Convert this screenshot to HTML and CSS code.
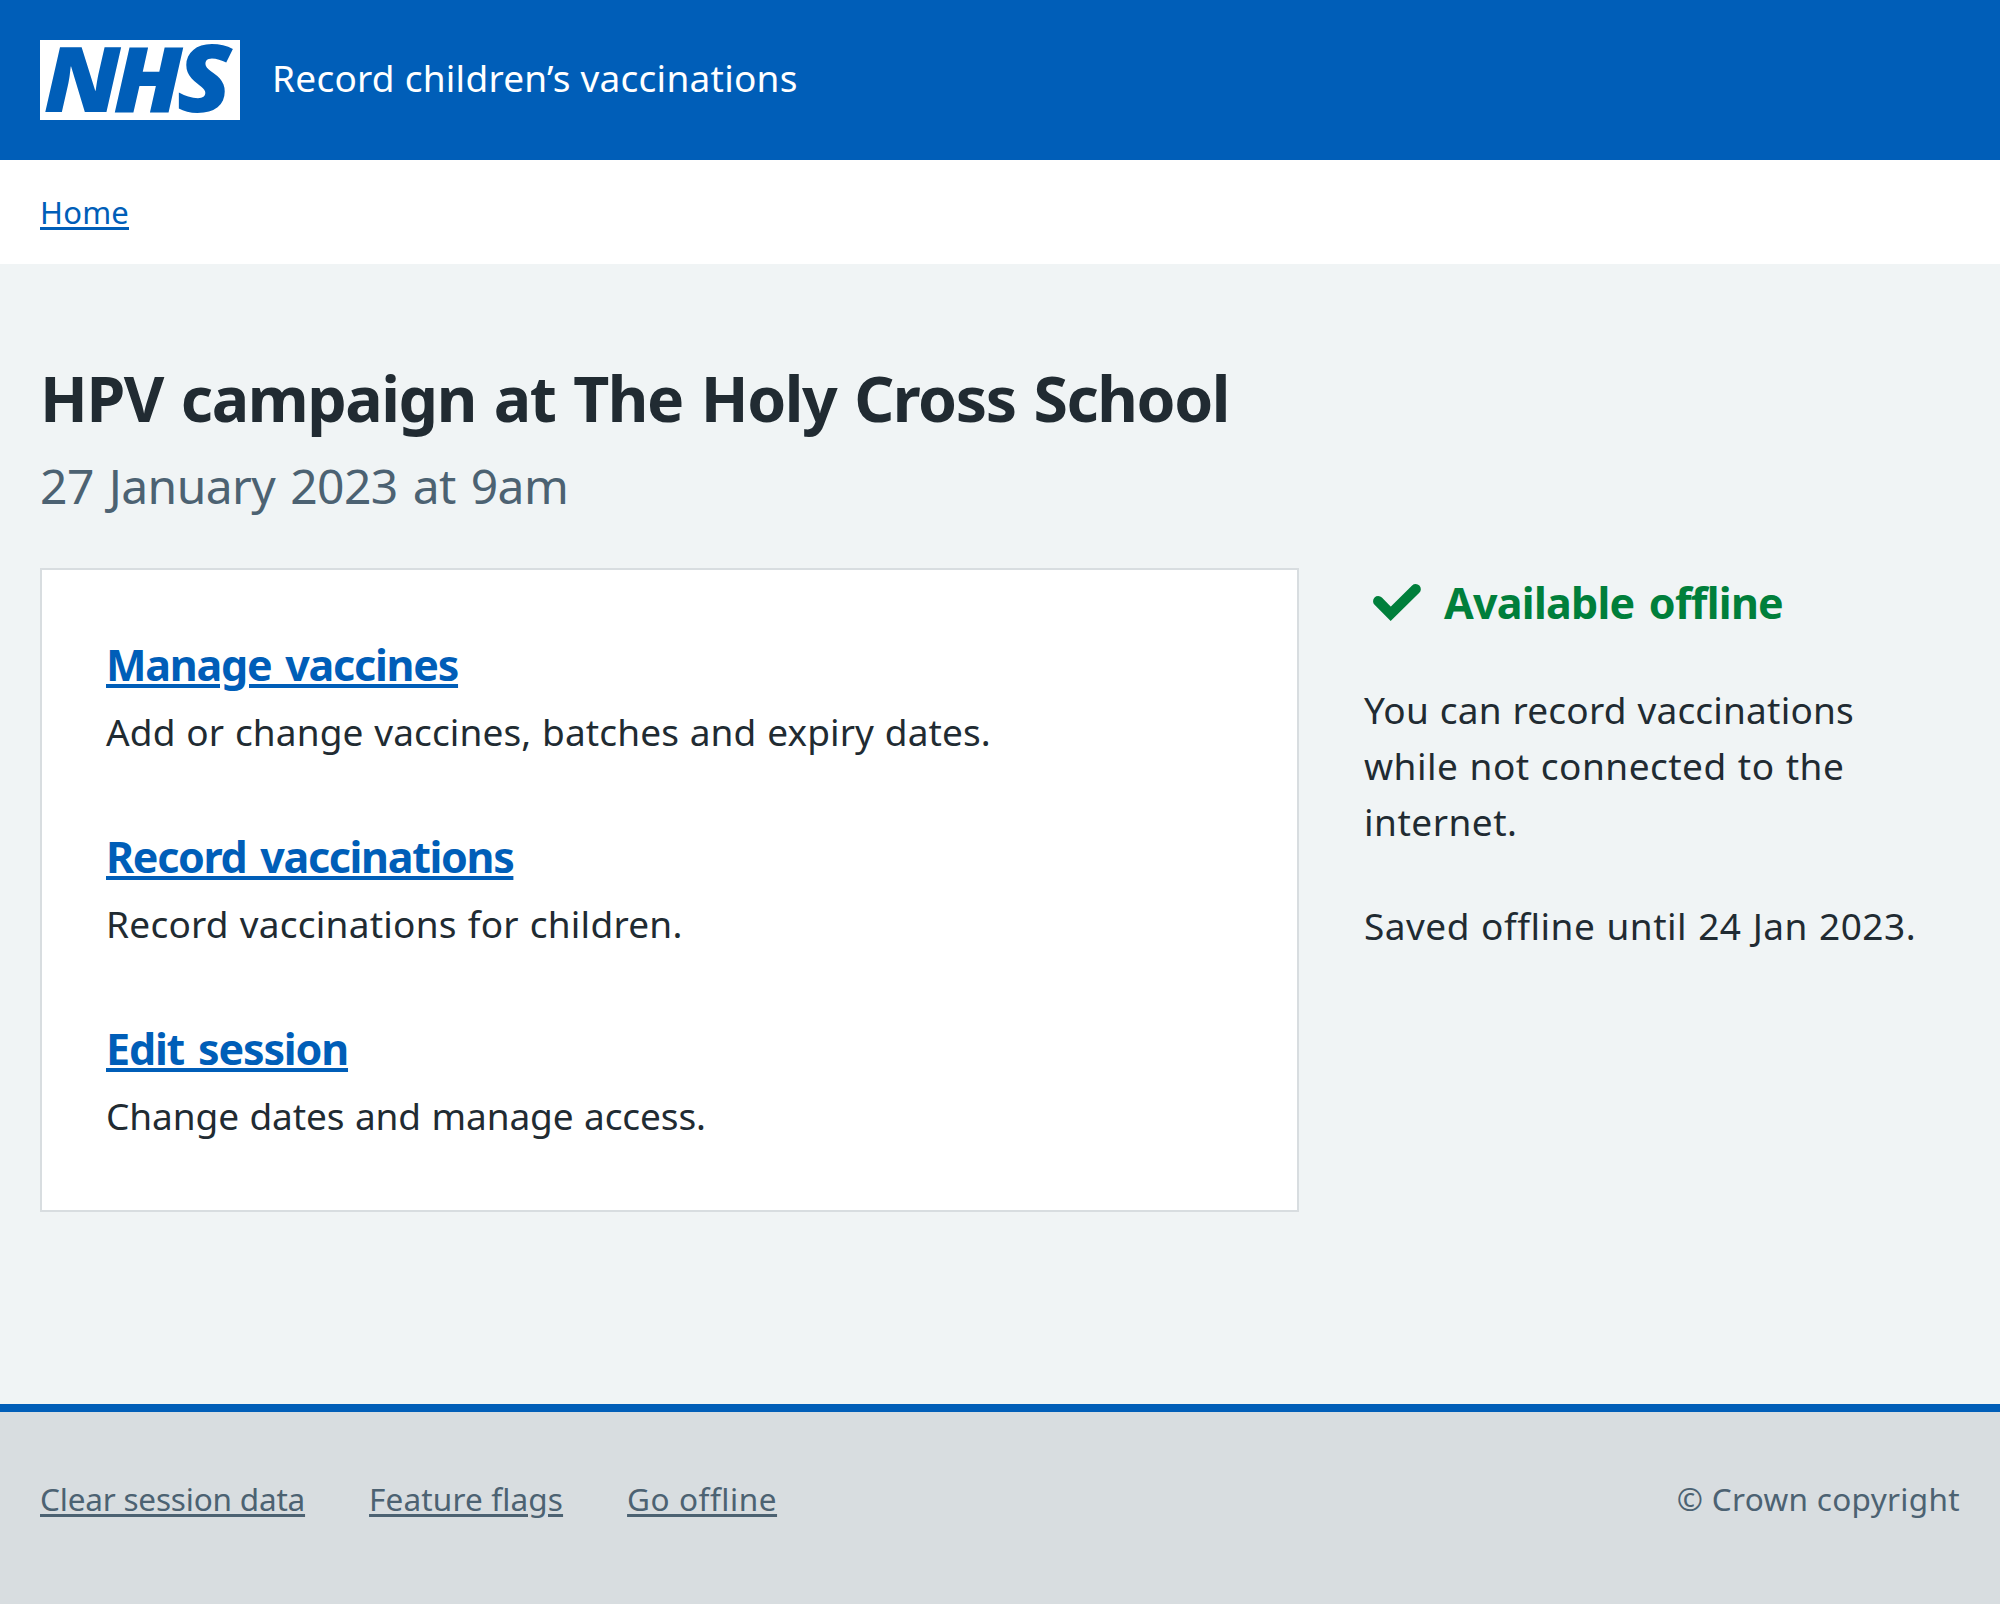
FILE: index.html
```html
<!DOCTYPE html>
<html lang="en">
<head>
<meta charset="utf-8">
<title>HPV campaign at The Holy Cross School</title>
<link rel="stylesheet" href="styles.css">
</head>
<body>
<header class="header">
  <svg class="logo" viewBox="0 0 200 80" role="img" aria-label="NHS">
    <rect width="200" height="80" fill="#fff"/>
    <text class="logo-letters" transform="translate(0 72.3) scale(1.07 1)" x="3.6 68.4 127.8">NH<tspan class="logo-s">S</tspan></text>
  </svg>
  <span class="service-name">Record children’s vaccinations</span>
</header>
<nav class="breadcrumb"><a class="home" href="#">Home</a></nav>
<main class="main">
  <h1 class="title">HPV campaign at The Holy Cross School</h1>
  <p class="date">27 January 2023 at 9am</p>
  <div class="columns">
    <ul class="card">
      <li class="task">
        <h2 class="task-title"><a class="task-link manage" href="#">Manage vaccines</a></h2>
        <p class="text add">Add or change vaccines, batches and expiry dates.</p>
      </li>
      <li class="task">
        <h2 class="task-title"><a class="task-link record" href="#">Record vaccinations</a></h2>
        <p class="text children">Record vaccinations for children.</p>
      </li>
      <li class="task">
        <h2 class="task-title"><a class="task-link edit" href="#">Edit session</a></h2>
        <p class="text access">Change dates and manage access.</p>
      </li>
    </ul>
    <aside class="side">
      <h2 class="status">
        <svg class="tick" viewBox="0 0 64 48" aria-hidden="true"><path d="M14.2 22.2L26.7 34.8L51.7 10.2" fill="none"/></svg>
        <span>Available offline</span>
      </h2>
      <p class="text"><span class="line first">You can record vaccinations</span> <span class="line second">while not connected to the</span> <span class="line second">internet.</span></p>
      <p class="text saved">Saved offline until 24 Jan 2023.</p>
    </aside>
  </div>
</main>
<footer class="footer">
  <ul class="footer-links">
    <li><a class="footer-link clear" href="#">Clear session data</a></li>
    <li><a class="footer-link flags" href="#">Feature flags</a></li>
    <li><a class="footer-link go" href="#">Go offline</a></li>
  </ul>
  <p class="copyright">© Crown copyright</p>
</footer>
</body>
</html>
```
FILE: styles.css
```css
* { box-sizing: border-box; margin: 0; padding: 0; }
body {
  display: flex;
  flex-direction: column;
  min-height: 1604px;
  background: #f0f4f5;
  color: #212b32;
  font-family: "Noto Sans", "Open Sans", sans-serif;
}
ul { list-style: none; }

.header {
  display: flex;
  align-items: center;
  gap: 32px;
  height: 160px;
  padding: 0 40px;
  background: #005eb8;
  color: #fff;
}
.logo { width: 200px; height: 80px; overflow: visible; }
.logo-letters { fill: #005eb8; font: italic 900 91px "Noto Sans", sans-serif; }
.logo-s { font-size: 94px; }
.service-name { padding-bottom: 4px; font-size: 37px; line-height: 48px; letter-spacing: 0.25px; }

.breadcrumb {
  display: flex;
  align-items: center;
  height: 104px;
  padding: 0 40px;
  background: #fff;
}
.home {
  color: #005eb8;
  font-size: 31px;
  line-height: 48px;
  letter-spacing: 0.2px;
  text-decoration-thickness: 3px;
  text-underline-offset: 3px;
}

.main { flex: 1; padding: 98px 40px 0; }
.title { font-size: 62.5px; line-height: 72px; letter-spacing: -1.42px; word-spacing: 3px; }
.date { margin-top: 22px; color: #4c6272; font-size: 48px; line-height: 60px; letter-spacing: -0.57px; word-spacing: 3px; }
.columns {
  display: grid;
  grid-template-columns: 1259px 1fr;
  gap: 65px;
  align-items: start;
  margin-top: 52px;
}
.card {
  display: flex;
  flex-direction: column;
  gap: 73px;
  padding: 71px 64px 66px;
  border: 2px solid #d8dde0;
  background: #fff;
}
.task { display: flex; flex-direction: column; gap: 15px; }
.task-title { font-size: 43px; line-height: 48px; word-spacing: 4px; }
.task-link {
  color: #005eb8;
  text-decoration-thickness: 4px;
  text-underline-offset: 3px;
}
.manage { letter-spacing: -1.25px; }
.record { letter-spacing: -1.34px; }
.edit { letter-spacing: -1.17px; }
.text { font-size: 37px; line-height: 56px; word-spacing: 1px; }
.add { letter-spacing: 0.12px; }
.children { letter-spacing: 0.25px; }
.access { letter-spacing: -0.1px; }

.side { padding-top: 11px; }
.status {
  display: flex;
  gap: 16px;
  margin-bottom: 55px;
  color: #007f3b;
  font-size: 43px;
  line-height: 48px;
  letter-spacing: -0.75px;
  word-spacing: 4px;
}
.tick { width: 64px; height: 48px; }
.tick path { stroke: currentColor; stroke-width: 10.3; stroke-linecap: round; stroke-linejoin: miter; }
.line { display: block; }
.first { letter-spacing: 0.2px; }
.second { letter-spacing: 0.5px; }
.saved { margin-top: 48px; letter-spacing: 0.5px; }

.footer {
  display: flex;
  justify-content: space-between;
  height: 200px;
  padding: 63px 40px 0;
  border-top: 8px solid #005eb8;
  background: #d8dde0;
  color: #4c6272;
  font-size: 31.5px;
  line-height: 48px;
}
.footer-links { display: flex; gap: 64px; }
.footer-link {
  color: inherit;
  text-decoration-thickness: 3px;
  text-underline-offset: 3px;
}
.clear { letter-spacing: -0.2px; }
.flags { letter-spacing: 0.15px; }
.go { letter-spacing: 0.56px; }
.copyright { letter-spacing: 0.32px; }
```
